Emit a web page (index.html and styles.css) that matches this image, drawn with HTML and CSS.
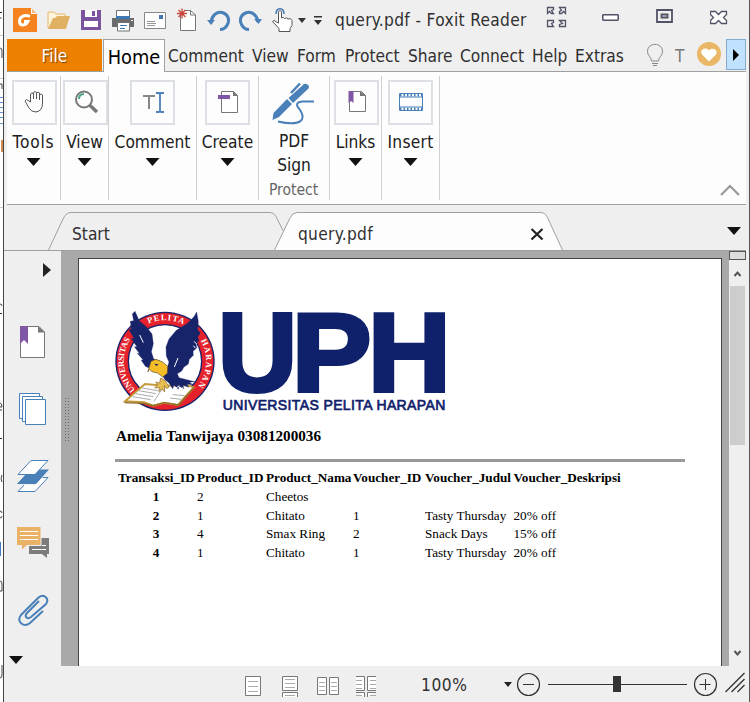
FILE: index.html
```html
<!DOCTYPE html>
<html lang="en">
<head>
<meta charset="utf-8">
<title>query.pdf - Foxit Reader</title>
<link rel="stylesheet" href="styles.css">
</head>
<body>
<div class="screen">
  <svg class="behind" width="3" height="702" viewBox="0 0 3 702" fill="none">
    <path d="M0 12.5h2M0 18h1.500M0 313.500h2M0 438.500h2" stroke="#333"/>
    <path d="M0 35.500h3M0 78.500h3M0 207.500h3" stroke="#ccc"/>
    <path d="M0 48q2 0 2 3v7M0 84h2v5M0 304q2 0 2 2M0 403q2 0 2 4H0m0 3h2M2 475q-2 4 0 7M0 511q2 0 2 2M0 518q2 0 2-2M0 581q2 0 2 3v7H0M2 665v10q0 3-2 3" stroke="#444"/>
    <path d="M0 97.500h3M0 102.500h3M0 107.500h3M0 112.500h3M0 117.500h3M0 123.500h3" stroke="#6a92d0"/>
    <path d="M2 140v12" stroke="#d28b4c" stroke-width="2"/><path d="M.5 542v14" stroke="#3d7dc0"/>
  </svg>
  <div class="window">
    <header class="titlebar">
      <svg width="26" height="39" viewBox="13 0 26 39"><path fill="#f5831f" d="M13 8h18l6 6v18H13z"/><path fill="#fff" d="M31 8l6 6h-6z"/><path fill="#f9b679" d="M32 9v4h4z"/><path d="M30 16.500c-6-3-11 1-10.500 5.500.5 4 6.500 4 8.500-.500h-4" fill="none" stroke="#fff" stroke-width="3"/></svg>
      <svg width="26" height="39" viewBox="47 0 26 39"><path d="M48 28V12h6l2 2h9v5" fill="#fff3d8" stroke="#e2b86d"/><path d="M48 29l5-11h2l2-2h13l-4 13z" fill="#e0b163"/></svg>
      <svg width="22" height="39" viewBox="81 0 22 39"><path fill="#7b54a0" d="M81 10h20v20H81z"/><path fill="#fff" d="M85 10h12v7H85zM84 21h14v6H84z"/><path fill="#7b54a0" d="M92 11h3v5h-3z"/></svg>
      <svg width="24" height="39" viewBox="112 0 24 39"><path d="M116.500 18v-7.500h13V18" fill="#fff" stroke="#707070"/><path fill="#6b6b6b" d="M112 18h22v9h-22z"/><path fill="#3f78b3" d="M116 16h14v3h-14z"/><path d="M117.500 22.500h12V31h-12z" fill="#fff" stroke="#707070"/><path d="M120 25.500h7M120 28.500h5" stroke="#3f78b3"/><path fill="#fff" d="M131 20h2v1h-2z"/></svg>
      <svg width="24" height="39" viewBox="144 0 24 39"><path d="M144.500 12.500h21v16h-21z" fill="#fff" stroke="#888"/><path fill="#3f78b3" d="M159 15h4v4h-4z"/><path d="M147 21.500h8M147 23.500h9M147 25.500h8" stroke="#999"/></svg>
      <svg width="22" height="39" viewBox="177 0 22 39"><path d="M180.500 13v17.500h15V15l-5-4.500H185" fill="#fff" stroke="#777"/><path d="M190.500 10.500V15h5" fill="none" stroke="#777"/><path d="M182 8.500v10M177 13.500h10M178.500 10l7 7M185.500 10l-7 7" stroke="#c9463b" stroke-width="1.300"/></svg>
      <svg width="25" height="39" viewBox="207 0 25 39"><path d="M211 22c1-7 6-10.500 11-9.500 6 1.500 8 7 5.500 12-1.500 3-4 5-7.500 5" fill="none" stroke="#4a80b8" stroke-width="3"/><path fill="#4a80b8" d="M207 20h8l-4 5z"/></svg>
      <svg width="25" height="39" viewBox="238 0 25 39"><path d="M258 22c-1-7-6-10.500-11-9.500-6 1.500-8 7-5.500 12 1.500 3 4 5 7.500 5" fill="none" stroke="#4a80b8" stroke-width="3"/><path fill="#4a80b8" d="M262 19h-8l4.500 5z"/></svg>
      <svg width="22" height="39" viewBox="272 0 22 39"><path d="M276 14c0-7 8-7 8 0" fill="none" stroke="#3f78b3" stroke-width="1.500"/><path d="M278.500 23V11.500q1.500-2 3 0V18q2-1.500 3 .5 2-1.500 3.500.5 3-1.500 4 1.500v5l-2 3v3h-11v-3l-6.500-7q1-2.500 4 .5z" fill="#fff" stroke="#555"/></svg>
      <svg width="10" height="39" viewBox="298 0 10 39"><path fill="#333" d="M298 18h8l-4 5z"/></svg>
      <svg width="10" height="39" viewBox="314 0 10 39"><path fill="#333" d="M314 16h8v1.500h-8zM314 20h8l-4 5z"/></svg>
      <h1 class="title">query.pdf - Foxit Reader</h1>
      <svg width="22" height="39" viewBox="546 0 22 39" fill="none" stroke="#505366" stroke-width="1.300"><path d="M547.500 13.500v-6h6v2l-2 1 2 3h-2l-2-2zM559.500 7.500h6v6l-2-2-2 2h-2v-2l2-1zM547.500 20.500h6v2l-2 1 2 3h-6zM559.500 20.500h6v6h-6v-2l3-1z"/></svg>
      <svg width="18" height="39" viewBox="602 0 18 39"><rect x="602.750" y="14.750" width="15.500" height="5.500" rx=".7" fill="#fff" stroke="#505366" stroke-width="1.500"/></svg>
      <svg width="18" height="39" viewBox="656 0 18 39"><path d="M657 10h15v12h-15zM661.500 14.500h6v3h-6z" fill="none" stroke="#505366" stroke-width="1.800"/></svg>
      <svg width="18" height="39" viewBox="710 0 18 39"><path d="M710.500 11.500h5l3 3 3-3h5v3l-3 3 3 3v3h-5l-3-3-3 3h-5v-3l3-3-3-3z" fill="#fff" stroke="#505366" stroke-width="1.300"/></svg>
    </header>

    <nav class="menu">
      <a class="file">File</a><a class="home">Home</a>
      <a>Comment</a><a>View</a><a>Form</a><a>Protect</a><a>Share</a><a>Connect</a><a>Help</a><a>Extras</a>
      <svg width="20" height="30" viewBox="646 40 20 30" fill="none" stroke="#888"><path d="M651.500 62c0-4-4-5-4-9.500 0-9.500 15-9.500 15 0 0 4.500-4 5.500-4 9.500zM652 64.500h6M653 66.500h4"/></svg>
      <span class="tee">T</span>
      <svg width="26" height="30" viewBox="696 40 26 30"><circle cx="709" cy="55" r="12" fill="#e9b765"/><path fill="#fff" d="M709 62.500l-6.500-6.500c-4-5 3-9 6.500-4.500 3.500-4.500 10.500.5 6.500 4.500z"/></svg>
      <span class="more"><svg width="8" height="12" viewBox="0 0 8 12"><path d="M1 0v12l6-6z"/></svg></span>
    </nav>

    <section class="ribbon">
      <div class="group tools"><div class="box"><svg width="24" height="26" viewBox="0 0 24 26" fill="none" stroke="#555"><path d="M7.500 13V5q1.500-2.500 3 0v5V3.500q1.500-2 3 0V10 4q1.500-2 3 0v7-5q1.500-2 3 0v8q0 8-6.500 9-5 0-7-4L2 12q1-3 4 0z"/></svg></div><b>Tools</b><i></i></div>
      <div class="group view"><div class="box"><svg width="26" height="26" viewBox="0 0 26 26" fill="none"><circle cx="11" cy="10.500" r="8" stroke="#777" stroke-width="2"/><path d="M6 10q0-5 5-5" stroke="#4aa58a" stroke-width="2"/><path d="M16.500 16l7.500 7" stroke="#777" stroke-width="3.500"/></svg></div><b>View</b><i></i></div>
      <div class="group comment"><div class="box"><svg width="24" height="24" viewBox="0 0 24 24" fill="none"><path d="M2 6h12M8 6v13" stroke="#888" stroke-width="2"/><path d="M15 3h3l1 1 1-1h3M19 4v17M15 22h3l1-1 1 1h3" stroke="#4a80b8" stroke-width="1.800"/></svg></div><b>Comment</b><i></i></div>
      <div class="group create"><div class="box"><svg width="24" height="24" viewBox="0 0 24 24" fill="none"><path d="M5.500 1.500h12l4 4v17h-16z" fill="#fff" stroke="#777"/><path d="M17 1v5h5z" fill="#777"/><path d="M2 5h12v4H2z" fill="#8057a4"/></svg></div><b>Create</b><i></i></div>
      <div class="group sign"><svg width="44" height="44" viewBox="0 0 44 44" fill="none"><path d="M1.500 38l1-7L16 17l5 5L8 35z" fill="#4a80b8"/><path d="M22 21l-4.500-5L33 2q2-1 4 1t0 4z" fill="#4a80b8"/><path d="M20 11l9-9.500" stroke="#4a80b8" stroke-width="2.500"/><path d="M43 19.500H32c-7 0-7 4-4 7 9 12 1 18-21 13" stroke="#4a80b8" stroke-width="2"/></svg><b>PDF<br>Sign</b><small>Protect</small></div>
      <div class="group links"><div class="box"><svg width="24" height="24" viewBox="0 0 24 24" fill="none"><path d="M4.500 1.500h12l4 4v16h-16z" fill="#fff" stroke="#777"/><path d="M15 1v5h6z" fill="#777"/><path d="M3.500 1h5v12L6 11l-2.500 2z" fill="#8057a4"/></svg></div><b>Links</b><i></i></div>
      <div class="group insert"><div class="box"><svg width="24" height="18" viewBox="0 0 24 18" fill="none" stroke="#4a80b8"><path d="M.5.5h23v17H.5zM0 4h24M0 14h24"/><path d="M1 2.300h22M1 15.700h22" stroke-width="2.500" stroke-dasharray="1.500 2"/></svg></div><b>Insert</b><i></i></div>
      <svg class="collapse" width="20" height="12" viewBox="0 0 20 12"><path d="M1 11l9-9 9 9" fill="none" stroke="#999" stroke-width="2.200"/></svg>
    </section>

    <nav class="doctabs">
      <svg class="shape" width="742" height="46" viewBox="4 205 742 46" fill="none" stroke="#a0a0a0"><path d="M48.500 250L63 219q3-6.500 8-6.500h199q4 0 6 4l7 14"/><path fill="#fdfdfd" d="M274.500 250L290 218q2.500-5.500 7-5.500h244q4 0 6 4l15.500 33.500"/><path d="M4 250.500h742"/></svg>
      <span class="tab-start">Start</span><span class="tab-doc">query.pdf</span>
      <svg width="14" height="14" viewBox="0 0 14 14"><path d="M1.500 2l11 10.500M12.500 2l-11 10.500" stroke="#222" stroke-width="2.200"/></svg>
      <i></i>
    </nav>

    <main class="work">
      <aside class="side">
        <svg class="expand" width="8" height="14" viewBox="0 0 8 14"><path d="M0 0v14l8-7z" fill="#222"/></svg>
        <svg class="tool" width="34" height="36" viewBox="16 324 34 36" fill="none"><path d="M20.500 326.500H39l5.500 5.500v25.500h-24z" fill="#fff" stroke="#777"/><path d="M38 326v6.500h7z" fill="#777"/><path d="M20 326h8v18l-4-4-4 4z" fill="#8057a4"/></svg>
        <svg class="tool" width="34" height="36" viewBox="16 391 34 36" fill="#fff" stroke="#4a80b8"><path d="M19.500 393.500h20v25h-20z"/><path d="M22.500 396.500h20v25h-20z"/><path d="M25.500 399.500h20v25h-20z"/></svg>
        <svg class="tool" width="34" height="36" viewBox="16 458 34 36" fill="#fff" stroke="#4a80b8"><path d="M18 491.500l13-14h17l-13 14z"/><path d="M16 484.500l14-15.500h20l-14 15.500z" fill="#4a80b8" stroke="#efefef"/><path d="M18 474.500l13-14h17l-13 14z"/></svg>
        <svg class="tool" width="34" height="36" viewBox="16 525 34 36"><path d="M29 538h20v16h-2v4l-5-4H29z" fill="#7c7c7c"/><path d="M16.500 526.500H41v19H27l-5.500 5v-5h-5z" fill="#eab266" stroke="#efefef"/><path d="M20 531.500h18M20 535.500h18M20 539.500h18M32 549.500h14M42 545.500h4" stroke="#fff"/></svg>
        <svg class="tool" width="34" height="36" viewBox="16 592 34 36"><path d="M43 611L30 623c-6 5-14-1-9-8l17-17c5-5 12 0 8 6l-15 13c-4 3-7-1-4-4l12-12" fill="none" stroke="#4a80b8" stroke-width="2"/></svg>
        <i></i>
      </aside>
      <div class="canvas">
        <svg class="handle" width="5" height="45" viewBox="0 0 5 45"><path d="M.5 0v45M3.500 0v45" stroke="#666" stroke-dasharray="1 2"/></svg>
        <article class="page">
          <svg class="logo" width="332" height="104" viewBox="45 30 996 312">
            <circle cx="195" cy="184" r="149" fill="#17246a"/><circle cx="195" cy="184" r="145" fill="#e5222b"/><circle cx="195" cy="184" r="110" fill="#fff" stroke="#17246a" stroke-width="4"/>
            <defs><path id="ring" d="M107.600 271.400A123.600 123.600 0 1 1 282.400 271.400"/></defs>
            <g class="seal"><text><textPath href="#ring" startOffset="2" textLength="165">UNIVERSITAS</textPath></text><text><textPath href="#ring" startOffset="240" textLength="108">PELITA</textPath></text><text><textPath href="#ring" startOffset="420" textLength="144">HARAPAN</textPath></text></g>
            <path fill="#fff" stroke="#c39b3b" stroke-width="6" d="M75 304l60-52 58 5 68-2 20 7-47 53-42-7-32 9-28-10z"/>
            <path fill="none" stroke="#8c6c28" stroke-width="4" d="M74 308l57 2 28 7 33-9 43 7 47-53"/>
            <path fill="none" stroke="#aaa" stroke-width="3" d="M126 264l48 8M116 272l52 9M106 281l54 9M98 290l54 9M210 294l34 4M218 284l36 3M162 304l30-46"/>
            <path fill="#17246a" stroke="#17246a" stroke-width="1" d="M105 34l13 29 21 17 17 22 4 29-6 24 7 22 16 5 25 20 5-16-8-18-1-27 9-24 22-26 31-19 22-22 8-14 5 29-2 24 8 10-8 13 4 9-9 11 2 12-11 10 1 12-12 12-3 14-13 9-7 12-13 8 5 12 47 12-16 2 12 8-19-3 5 10-17-7 2 11-15-9-1 11-13-13-4 11-11-17-12-10-9-15-24-13-26-12-12-18 5-2-17-19 7 1-16-21 8 1-18-26 10 1-16-26 7-4-3-22 10-2-4-20z"/>
            <path fill="#f4bd28" stroke="#604b24" stroke-width="2" d="M146 207l7-23 15-6 20 8 15 13-1 21-14 11-15-12-17-4-8-8-4 9z"/>
            <path fill="#17246a" d="M163 191l13 2-7 5z"/>
            <path fill="#e6bd51" stroke="#86682d" stroke-width="2" d="M182 234l12 6 13 21-7 5-7-9 1 19-8-10-9 9 1-12-14 1 9-10-6-8 12 3z"/>
            <path d="M210 278l28-21M222 281l27-18M236 282l20-13M250 282l22-15M119 105l11 23M234 174l-11 27M282 124l8 8M280 137l6 7" stroke="#fff" stroke-width="3"/>
            <g class="wordmark"><text x="354" y="274" textLength="237" lengthAdjust="spacingAndGlyphs">U</text><text x="575" y="274" textLength="239" lengthAdjust="spacingAndGlyphs">P</text><text x="804" y="274" textLength="248" lengthAdjust="spacingAndGlyphs">H</text></g>
            <text class="tagline" x="368" y="331" textLength="668">UNIVERSITAS PELITA HARAPAN</text>
          </svg>
          <p class="owner">Amelia Tanwijaya 03081200036</p>
          <hr>
          <div class="table">
            <b>Transaksi_ID</b><b>Product_ID</b><b>Product_Nama</b><b>Voucher_ID</b><b>Voucher_Judul</b><b>Voucher_Deskripsi</b>
            <b>1</b><span>2</span><span>Cheetos</span><span></span><span></span><span></span>
            <b>2</b><span>1</span><span>Chitato</span><span>1</span><span>Tasty Thursday</span><span>20% off</span>
            <b>3</b><span>4</span><span>Smax Ring</span><span>2</span><span>Snack Days</span><span>15% off</span>
            <b>4</b><span>1</span><span>Chitato</span><span>1</span><span>Tasty Thursday</span><span>20% off</span>
          </div>
        </article>
      </div>
      <div class="scroll">
        <div class="split"></div>
        <svg width="9" height="7" viewBox="0 0 9 7"><path d="M1.500 6l3-3.500 3 3.500" fill="none" stroke="#555" stroke-width="2"/></svg>
        <div class="thumb"></div>
        <svg class="down" width="9" height="7" viewBox="0 0 9 7"><path d="M1.500 1l3 3.500 3-3.500" fill="none" stroke="#555" stroke-width="2"/></svg>
      </div>
    </main>

    <footer class="status">
      <svg width="17" height="20" viewBox="0 0 17 20" fill="none"><path d="M.5.500h15v19H.5z" fill="#fff" stroke="#777"/><path d="M3 5.500h10M3 10.500h10M3 15.500h10" stroke="#aaa"/></svg>
      <svg width="17" height="21" viewBox="0 0 17 21" fill="none"><path d="M.5.500h15v14H.5zM.5 21v-4.500h15V21" fill="#fff" stroke="#777"/><path d="M3 3.500h10M3 7.500h10M3 11.500h10M3 19.500h10" stroke="#aaa"/></svg>
      <svg width="23" height="20" viewBox="0 0 23 20" fill="none"><path d="M.5 1.500h9v17h-9zM12.500 1.500h9v17h-9z" fill="#fff" stroke="#777"/><path d="M2 6.500h6M2 10.500h6M2 14.500h6M14 6.500h6M14 10.500h6M14 14.500h6" stroke="#aaa"/></svg>
      <svg width="21" height="21" viewBox="0 0 21 21" fill="none"><path d="M0 .5h8.500v14H0M20 .5h-8.500v14H20M0 16.500h8.500V21M20 16.500h-8.500V21" fill="#fff" stroke="#777"/><path d="M0 4.500h6M0 8.500h6M0 12.500h6M14 4.500h6M14 8.500h6M14 12.500h6M0 19.500h6M14 19.500h6" stroke="#aaa"/></svg>
      <span>100%</span>
      <svg width="242" height="36" viewBox="504 666 242 36" fill="none" stroke="#333"><path d="M504 682h8l-4 5z" fill="#222" stroke="none"/><circle cx="528.500" cy="684.500" r="11" stroke-width="1.200"/><path d="M523 684.500h11M548 684.500h139M699.500 684.500h11M705.500 679v11"/><path d="M613 676h8v16h-8z" fill="#333" stroke="none"/><circle cx="705.500" cy="684.500" r="11" stroke-width="1.200"/><path d="M725.500 692l19-19M731.500 692l13-13M737.500 692l7-7" stroke-width="1.300"/></svg>
    </footer>
  </div>
</div>
</body>
</html>
```
FILE: styles.css
```css
* { box-sizing: border-box; }
body { margin: 0; background: #fff; color: #303030; font: 17.2px/24px "DejaVu Sans Condensed", "DejaVu Sans", sans-serif; font-stretch: condensed; overflow: hidden; }
svg { display: block; flex: none; }
i { display: block; width: 14px; height: 8px; background: #111; clip-path: polygon(0 0, 100% 0, 50% 100%); }
.screen { display: flex; width: 750px; height: 702px; }
.behind { flex: none; }
.window { width: 747px; height: 702px; border-left: 1px solid #444; border-right: 1px solid #555; background: #efefef; }
.titlebar { display: grid; grid-template-columns: 34px 34px 31px 32px 33px 30px 31px 34px 26px 16px 21px 211px 56px 54px 54px 20px; height: 39px; padding-left: 9px; }
.title { margin: 8px 0 0; font: inherit; letter-spacing: .33px; white-space: nowrap; }
.menu { display: grid; grid-template-columns: 96px 65px 84px 45px 48px 63px 52px 72px 43px 71px 29px 21px 30px 20px; height: 33px; margin: 0 3px; border-bottom: 1px solid #a0a0a0; line-height: 35px; white-space: nowrap; }
.file { width: 95px; height: 32px; background: #ee8000; color: #fff; text-align: center; text-shadow: 1px 1px 1px #704000; }
.home { width: 62px; height: 33px; background: #fdfdfd; border: 1px solid #a0a0a0; border-bottom: 0; color: #000; font-size: 19.8px; text-align: center; }
.tee { color: #777; }
.more { display: flex; align-items: center; justify-content: center; height: 31px; border: 1px solid #83acd0; background: #c0e2ff; }
.ribbon { display: flex; height: 133px; margin: 0 3px; padding-top: 4px; background: #fdfdfd; border-bottom: 1px solid #a0a0a0; }
.group { display: flex; flex-direction: column; align-items: center; flex: none; height: 124px; padding-top: 4px; border-right: 1px solid #d0d0d0; color: #202020; }
.group b { font-weight: normal; margin-top: 5px; text-align: center; white-space: nowrap; }
.group i { margin-top: 4px; }
.box { display: flex; align-items: center; justify-content: center; flex: none; width: 45px; height: 45px; border: 2px solid #dcdfe4; }
.box svg { margin-top: -2px; }
.tools { width: 54px; }
.tools b { letter-spacing: .8px; }
.tools .box, .view .box, .links .box { margin-left: 2px; }
.view { width: 48px; }
.comment { width: 88px; }
.create { width: 62px; }
.sign { width: 71px; padding-top: 0; }
.sign svg { margin-top: 6px; margin-left: -2px; }
.sign b { margin-top: 3px; }
.sign small { font-size: 15.500px; line-height: 24px; margin-top: 1px; margin-left: -1px; color: #666; }
.links { width: 52px; }
.insert { width: 58px; }
.insert b { letter-spacing: .3px; }
.collapse { margin: 108px 6px 0 auto; }
.doctabs { position: relative; display: flex; height: 46px; }
.doctabs .shape { position: absolute; left: 0; top: 0; }
.tab-start, .tab-doc { position: relative; margin-top: 17px; }
.tab-start { width: 226px; margin-left: 68px; }
.tab-doc { width: 232px; letter-spacing: .3px; }
.doctabs svg:not(.shape) { position: relative; margin-top: 22px; }
.doctabs i { margin: 22px 0 0 183px; }
.work { display: flex; height: 415px; }
.side { width: 57px; flex: none; }
.expand { margin: 12px 0 47px 39px; }
.tool { margin: 0 0 31px 12px; }
.side i { margin-top: -3px; margin-left: 5px; }
.canvas { display: flex; width: 668px; flex: none; background: #a9a9a9; }
.handle { margin: 147px 8px 0 4px; }
.page { width: 644px; height: 408px; margin-top: 7px; padding: 51px 36px 0; background: #fff; border: 1px solid #444; border-bottom: 0; color: #000; font-family: "Liberation Serif", serif; font-stretch: normal; }
.logo { overflow: visible; }
.seal { fill: #fff; font: bold 25px "Liberation Serif", serif; }
.wordmark { fill: #10216b; stroke: #10216b; stroke-width: 12px; font: bold 335px "Liberation Sans", sans-serif; }
.tagline { fill: #10216b; stroke: #10216b; stroke-width: 2px; font: 42px "Liberation Sans", sans-serif; }
.owner { margin: 12px 0 0 1px; font-size: 15.200px; font-weight: bold; line-height: 20px; white-space: nowrap; }
hr { width: 570px; height: 3px; margin: 13px 0 7px; border: 0; background: #999; }
.table { display: grid; grid-template-columns: 79px 69px 87px 72px 88.500px 110px; grid-auto-rows: 18.750px; margin-left: 3px; font-size: 13.200px; line-height: 18px; white-space: nowrap; }
.table b:nth-child(n+7) { width: 76px; text-align: center; }
.scroll { width: 17px; flex: none; display: flex; flex-direction: column; align-items: center; }
.split { width: 17px; height: 9px; border: 1px solid #555; background: #ddd; margin-bottom: 10px; }
.thumb { width: 15px; height: 159px; margin-top: 9px; background: #cdcdcd; }
.scroll .down { margin-top: 205px; }
.status { display: flex; height: 36px; padding-left: 241px; }
.status > svg { margin-top: 10px; margin-right: 20px; }
.status > svg:nth-child(2) { margin-right: 18px; }
.status > svg:nth-child(3) { margin-right: 16px; }
.status > span { width: 83px; margin: 7px 0 0 24px; letter-spacing: .6px; }
.status > svg:last-child { margin: 0; }
```
